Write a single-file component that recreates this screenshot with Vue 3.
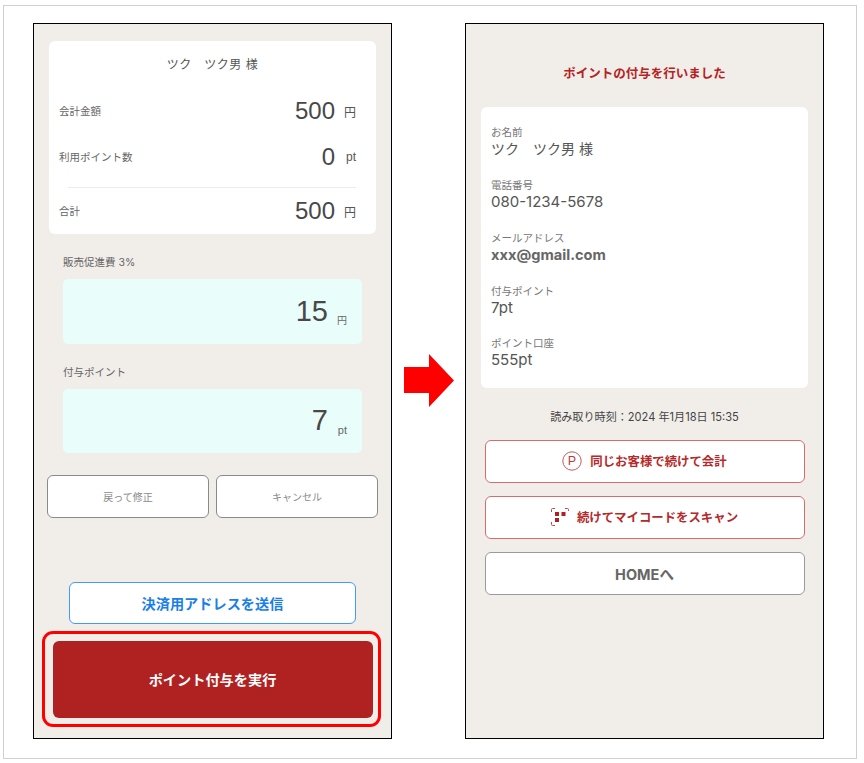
<script setup>
const rows = [
  { label: '会計金額', value: '500', unit: '円', cls: 'r1' },
  { label: '利用ポイント数', value: '0', unit: 'pt', cls: 'r2' }
]
const boxes = [
  { label: '販売促進費 3%', value: '15', unit: '円', cls: 'yen' },
  { label: '付与ポイント', value: '7', unit: 'pt', cls: 'pt' }
]
const infos = [
  { label: 'お名前', value: 'ツク　ツク男 様', jp: true },
  { label: '電話番号', value: '080-1234-5678' },
  { label: 'メールアドレス', value: 'xxx@gmail.com', bold: true },
  { label: '付与ポイント', value: '7pt' },
  { label: 'ポイント口座', value: '555pt' }
]
</script>

<template>
  <div class="frame">
    <section class="phone left">
      <div class="card">
        <div class="name">ツク　ツク男 様</div>
        <div v-for="r in rows" :key="r.label" class="row" :class="r.cls">
          <span class="row-label">{{ r.label }}</span>
          <span class="row-amount"><b>{{ r.value }}</b><i>{{ r.unit }}</i></span>
        </div>
        <div class="divider"></div>
        <div class="row r3">
          <span class="row-label">合計</span>
          <span class="row-amount"><b>500</b><i>円</i></span>
        </div>
      </div>

      <div v-for="b in boxes" :key="b.label" class="field">
        <div class="field-label">{{ b.label }}</div>
        <div class="mint">
          <b>{{ b.value }}</b><i :class="b.cls">{{ b.unit }}</i>
        </div>
      </div>

      <div class="pair">
        <button class="btn ghost">戻って修正</button>
        <button class="btn ghost second">キャンセル</button>
      </div>

      <button class="btn send">決済用アドレスを送信</button>

      <div class="highlight">
        <button class="btn run">ポイント付与を実行</button>
      </div>
    </section>

    <div class="arrow-col">
      <svg width="50" height="53" viewBox="0 0 50 53" aria-hidden="true">
        <path d="M0 13H25V0L50 26.5L25 53V39H0Z" fill="#ff0000" />
      </svg>
    </div>

    <section class="phone right">
      <h1 class="done">ポイントの付与を行いました</h1>
      <div class="info">
        <div v-for="i in infos" :key="i.label" class="info-item">
          <div class="info-label">{{ i.label }}</div>
          <div class="info-value" :class="{ strong: i.bold, jp: i.jp }">{{ i.value }}</div>
        </div>
      </div>
      <div class="stamp">読み取り時刻：2024 年1月18日 15:35</div>
      <div class="actions">
        <button class="btn action red">
          <svg width="20" height="20" viewBox="0 0 20 20" aria-hidden="true">
            <circle cx="10" cy="10" r="9.2" fill="none" stroke="#c25a5a" stroke-width="1" />
            <text x="10" y="14.4" text-anchor="middle" font-size="12.5" font-weight="400" fill="#b8393a" font-family="Liberation Sans, sans-serif">P</text>
          </svg>
          同じお客様で続けて会計
        </button>
        <button class="btn action red">
          <svg width="18" height="18" viewBox="0 0 18 18" aria-hidden="true">
            <path d="M.5 4V1.5Q.5.5 1.5.5H4M14 .5H16.500Q17.500.5 17.500 1.500V3M.5 14V16.500Q.5 17.500 1.500 17.500H4" fill="none" stroke="#b84a4a" stroke-width="1" />
            <path d="M4 4H8V8H4ZM10.500 4H14.500V8H10.500ZM4 10H8V14H4Z" fill="#b01f22" />
          </svg>
          続けてマイコードをスキャン
        </button>
        <button class="btn action home">HOMEへ</button>
      </div>
    </section>
  </div>
</template>

<style>
html, body { margin: 0; background: #fff; }
</style>

<style scoped>
.frame {
  box-sizing: border-box;
  width: 854px;
  height: 754px;
  margin: 5px 0 0 3px;
  padding: 17px 0 0 29px;
  display: flex;
  align-items: flex-start;
  border: 1px solid #d0d0d0;
  background: #fff;
  font-family: "Liberation Sans", "Noto Sans CJK JP", sans-serif;
  color: #484848;
}
.phone {
  box-sizing: border-box;
  width: 359px;
  height: 716px;
  display: flex;
  flex-direction: column;
  flex: none;
  border: 1px solid #000;
  background: #f1eeea;
}
.arrow-col {
  box-sizing: border-box;
  width: 73px;
  height: 716px;
  flex: none;
  padding: 331px 0 0 12px;
}
.arrow-col svg { display: block; }
.card {
  box-sizing: border-box;
  width: 327px;
  height: 193px;
  margin: 17px 0 0 15px;
  background: #fff;
  border-radius: 6px;
  flex: none;
}
.name {
  height: 48px;
  line-height: 48px;
  text-align: center;
  font-size: 12px;
  letter-spacing: 0.5px;
  color: #555;
}
.row {
  display: flex;
  align-items: center;
  justify-content: space-between;
  padding: 0 20px 0 10px;
}
.r1 { height: 44px; }
.r2 { height: 44px; margin-top: 2px; }
.r3 { height: 46px; }
.row-label { font-size: 10.5px; color: #666; margin-top: -2px; }
.row-amount { display: flex; align-items: center; }
.row-amount b { font-weight: 400; font-size: 24px; color: #484848; }
.row-amount i { width: 21px; text-align: right; font-style: normal; font-size: 12px; color: #555; }
.divider {
  height: 1px;
  margin: 8px 20px 0 19px;
  background: #ececec;
}
.field { margin: 21px 0 0 29px; flex: none; }
.field-label {
  height: 14px;
  line-height: 16px;
  font-family: Inter, "Noto Sans CJK JP", sans-serif;
  font-size: 10.5px;
  color: #666;
}
.mint {
  box-sizing: border-box;
  width: 299px;
  height: 64.500px;
  margin-top: 10px;
  padding: 0 15px 0 0;
  display: flex;
  align-items: center;
  justify-content: flex-end;
  border-radius: 5px;
  background: #e9fefa;
}
.mint b { font-weight: 400; font-size: 29px; color: #484848; }
.mint i {
  width: 19px;
  text-align: right;
  font-style: normal;
  color: #666;
  align-self: center;
}
.mint i.yen { font-size: 10px; padding-top: 16px; }
.mint i.pt { font-size: 11px; padding-top: 18px; }
.btn {
  display: flex;
  align-items: center;
  justify-content: center;
  box-sizing: border-box;
  padding: 0;
  margin: 0;
  font-family: inherit;
  background: #fff;
  cursor: pointer;
}
.pair {
  display: flex;
  gap: 7px;
  margin: 22px 0 0 13px;
  flex: none;
}
.ghost {
  width: 162px;
  height: 43px;
  border: 1px solid #8a8a8a;
  border-radius: 6px;
  font-size: 10px;
  color: #8a8a8a;
}
.send {
  flex: none;
  width: 287px;
  height: 42.500px;
  margin: 63.500px 0 0 35px;
  border: 1px solid #3f9bff;
  border-radius: 6px;
  font-size: 14.200px;
  font-weight: 700;
  color: #1a7fe8;
}
.highlight {
  box-sizing: border-box;
  flex: none;
  width: 339px;
  height: 96px;
  margin: 6.500px 0 0 8px;
  padding: 7px 5.500px 6px 7.500px;
  border: 3px solid #ff0000;
  border-radius: 11px;
}
.run {
  width: 100%;
  height: 100%;
  border: 0;
  border-radius: 6px;
  background: #b02222;
  color: #fff;
  font-size: 14.200px;
  font-weight: 700;
}
.done {
  margin: 0;
  height: 83px;
  line-height: 100px;
  flex: none;
  text-align: center;
  font-size: 12.500px;
  font-weight: 700;
  color: #b52222;
}
.info {
  box-sizing: border-box;
  flex: none;
  width: 327px;
  height: 281px;
  margin-left: 15px;
  padding: 18.300px 10px 0;
  border-radius: 6px;
  background: #fff;
}
.info-item { height: 52.750px; }
.info-label {
  height: 14px;
  line-height: 15.500px;
  font-size: 10.500px;
  color: #777;
}
.info-value {
  height: 20px;
  line-height: 20px;
  font-family: Inter, "Noto Sans CJK JP", sans-serif;
  font-size: 15px;
  color: #555;
}
.info-value.jp { font-size: 14px; }
.info-value.strong { font-size: 14.600px; font-weight: 700; color: #666; }
.stamp {
  margin-top: 21px;
  height: 16px;
  line-height: 16px;
  flex: none;
  text-align: center;
  font-family: Inter, "Noto Sans CJK JP", sans-serif;
  font-size: 11.100px;
  color: #444;
}
.actions {
  display: flex;
  flex-direction: column;
  gap: 13px;
  margin: 14.500px 0 0 18.500px;
  flex: none;
}
.action {
  width: 320px;
  height: 43px;
  gap: 8px;
  border-radius: 6px;
  font-weight: 700;
}
.red {
  border: 1.300px solid #d96a6e;
  color: #b52a2a;
  font-size: 12.400px;
}
.home {
  border: 1.300px solid #9a9a9a;
  color: #666;
  font-family: Inter, "Noto Sans CJK JP", sans-serif;
  font-size: 14.500px;
}
</style>
